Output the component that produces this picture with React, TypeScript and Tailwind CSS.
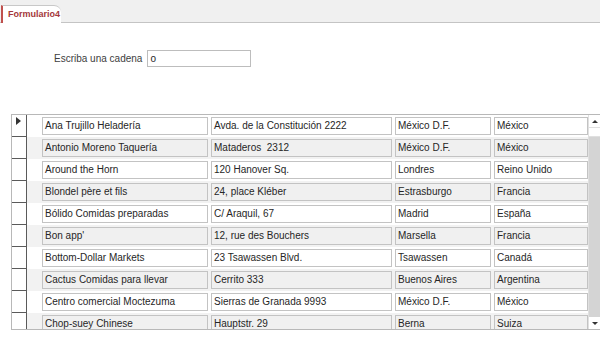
const rows = [
  ["Ana Trujillo Heladería", "Avda. de la Constitución 2222", "México D.F.", "México"],
  ["Antonio Moreno Taquería", "Mataderos  2312", "México D.F.", "México"],
  ["Around the Horn", "120 Hanover Sq.", "Londres", "Reino Unido"],
  ["Blondel père et fils", "24, place Kléber", "Estrasburgo", "Francia"],
  ["Bólido Comidas preparadas", "C/ Araquil, 67", "Madrid", "España"],
  ["Bon app'", "12, rue des Bouchers", "Marsella", "Francia"],
  ["Bottom-Dollar Markets", "23 Tsawassen Blvd.", "Tsawassen", "Canadá"],
  ["Cactus Comidas para llevar", "Cerrito 333", "Buenos Aires", "Argentina"],
  ["Centro comercial Moctezuma", "Sierras de Granada 9993", "México D.F.", "México"],
  ["Chop-suey Chinese", "Hauptstr. 29", "Berna", "Suiza"],
];

const widths = ["w-[166px]", "w-[181px]", "w-[96px]", "w-[94px]"];

function Cell({ text, width, alt }: { text: string; width: string; alt: boolean }) {
  return (
    <div
      className={`${width} h-[18px] shrink-0 border border-[#c3c3c3] px-[2px] text-[10px] leading-[16px] text-[#262626] whitespace-pre overflow-hidden ${
        alt ? "bg-[#f0f0f0]" : "bg-white"
      }`}
    >
      {text}
    </div>
  );
}

export default function App() {
  return (
    <div className="w-[600px] h-[362px] bg-white overflow-hidden" style={{ fontFamily: '"Liberation Sans", Arial, sans-serif' }}>
      <div className="h-[23px] bg-[#f0f0f0] border-b border-[#c4c4c4] flex items-end">
        <div className="relative ml-[1px] h-[18px] w-[60px] bg-white border-l-2 border-[#c0504d] border-t border-t-[#c8c8c8] rounded-tr-[7px] -mb-px pl-[5px] text-[9px] font-bold leading-[16px] text-[#a4373a]">
          Formulario4
        </div>
      </div>

      <div className="mt-[27px] flex items-center">
        <span className="ml-[54px] text-[10px] text-[#404040]">Escriba una cadena</span>
        <div className="ml-[5px] h-[17px] w-[104px] border border-[#bdbdbd] pl-[2px] text-[10px] leading-[15px] text-[#262626]">
          o
        </div>
      </div>

      <div className="mt-[47px] ml-[11px] h-[216px] border-l border-t border-b border-[#b8b8b8] flex overflow-hidden">
        <div className="w-[15px] shrink-0 border-r border-[#5a5a5a] flex flex-col">
          {rows.map((r, i) => (
            <div key={i} className="h-[22px] shrink-0 border-b border-[#5a5a5a] relative">
              {i === 0 && (
                <div className="absolute left-[4px] top-[2px] w-0 h-0 border-y-[4px] border-y-transparent border-l-[5px] border-l-[#333]" />
              )}
            </div>
          ))}
        </div>
        <div className="flex-1 flex flex-col">
          {rows.map((r, i) => (
            <div key={i} className={`h-[22px] shrink-0 flex items-center gap-[3px] pl-[15px] ${i % 2 === 1 ? "bg-[#f2f2f2]" : "bg-white"}`}>
              {r.map((t, j) => (
                <Cell key={j} text={t} width={widths[j]} alt={i % 2 === 1} />
              ))}
            </div>
          ))}
        </div>
        <div className="w-[12px] shrink-0 flex flex-col border-l border-[#e0e0e0]">
          <div className="h-[12px] bg-white flex items-center justify-center">
            <div className="w-0 h-0 border-x-[3px] border-x-transparent border-b-[3px] border-b-[#333]" />
          </div>
          <div className="h-[10px] bg-white border-y border-[#e0e0e0]" />
          <div className="flex-1 bg-[#d4d4d4]" />
          <div className="h-[12px] bg-white flex items-center justify-center">
            <div className="w-0 h-0 border-x-[3px] border-x-transparent border-t-[3px] border-t-[#333]" />
          </div>
        </div>
      </div>
    </div>
  );
}
